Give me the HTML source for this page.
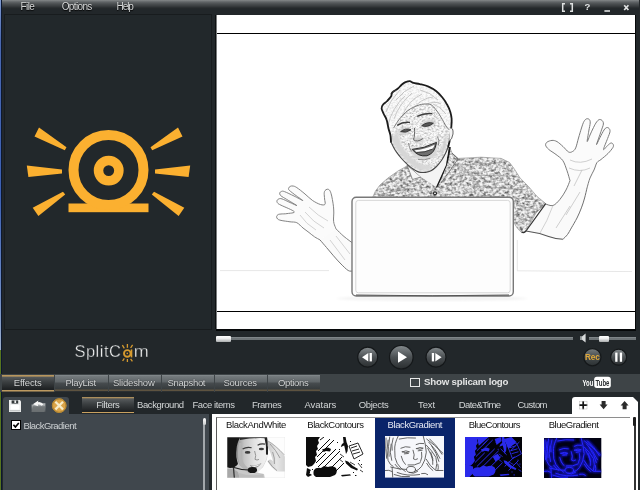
<!DOCTYPE html>
<html>
<head>
<meta charset="utf-8">
<title>SplitCam</title>
<style>
*{margin:0;padding:0;box-sizing:border-box;}
html,body{width:640px;height:490px;overflow:hidden;background:#22272a;}
body{position:relative;font-family:"Liberation Sans",sans-serif;font-size:10px;color:#cfd2d3;}
#app{position:absolute;left:0;top:0;width:640px;height:490px;overflow:hidden;will-change:transform;}
.abs{position:absolute;}
.t{position:absolute;white-space:nowrap;}
#topbar{left:0;top:0;width:640px;height:15px;background:linear-gradient(#858989 0px,#606466 2px,#4a4e50 4px,#3a3e40 6px,#262a2c 8px,#22272a 9px,#22272a 15px);}
#lstripe{left:0;top:0;width:1.2px;height:350px;background:linear-gradient(#7f9ad0 0,#4a68b0 12%,#3c60b4 55%,#6f8cc4 85%,#9db0cc 100%);}
#lstripe2{left:0;top:350px;width:1.2px;height:140px;background:#56741f;}
#leftpanel{left:4px;top:14px;width:208px;height:316px;background:#22282b;border:1px solid #181c1e;}
#video{left:216px;top:14px;width:420px;height:317px;background:#060809;}
#videow{left:217px;top:15px;width:418px;height:314px;background:#fff;overflow:hidden;}
#vl{left:215px;top:15px;width:2px;height:314px;background:linear-gradient(90deg,#0d1011 0,#0d1011 50%,#7a7c7d 50%);}
.hl{position:absolute;left:0;width:418px;height:1px;background:#000;}
.tabbar{left:0;top:374px;width:640px;height:18px;background:#3e4447;}
.tab{position:absolute;top:1px;height:17px;
 background:linear-gradient(#8b9194 0,#757b7e 1px,#5f6568 7px,#474c4f 8px,#363b3d 14px,#5e5340 15px,#5e5340 16px,#2c3032 16px,#2c3032 17px);}
.tab.act{top:0.5px;height:17px;background:linear-gradient(#b8965e 0,#b8965e 1.2px,#55595b 2px,#3b3f41 7px,#1f2224 14px,#1f2224 15px,#bd9a60 15px,#bd9a60 16.4px,#2c3032 16.6px);}
#ltab{left:3px;top:397px;width:66px;height:18px;background:#40474d;border-radius:3px 3px 0 0;}
#leftlist{left:3px;top:414px;width:206px;height:76px;background:#40474d;}
#rightlist{left:212px;top:414px;width:426px;height:76px;background:#fff;}
#rtab{left:572px;top:397px;width:66px;height:18px;background:#fff;border-radius:3px 0 0 0;}
</style>
</head>
<body>
<div id="app">
<div id="video" class="abs"></div>
<div id="vl" class="abs"></div>
<div id="videow" class="abs">
<svg style="position:absolute;left:0;top:0" width="418" height="314" viewBox="217 15 418 314">
 <defs>
  <filter id="soft" x="-5%" y="-5%" width="110%" height="110%"><feGaussianBlur stdDeviation="0.5"/></filter>
  <filter id="soft2" x="-5%" y="-5%" width="110%" height="110%"><feGaussianBlur stdDeviation="1.2"/></filter>
  <pattern id="shirt" width="6.2" height="5.2" patternUnits="userSpaceOnUse" patternTransform="rotate(-9)">
   <rect width="6.2" height="5.2" fill="#ececec"/>
   <path d="M0.3 1.5q1.5-1.8 3 0q-1.4 1.7-3 0z" fill="#646464"/>
   <path d="M3.3 4.1q1.4-1.7 2.7 0q-1.2 1.5-2.7 0z" fill="#7a7a7a"/>
   <path d="M0 3.9l1.9.7M3.8.7l2.1.6" stroke="#9a9a9a" stroke-width=".7"/>
   <path d="M1.2 2.9l1 .5M4.6 2.2l.9.5" stroke="#c2c2c2" stroke-width=".6"/>
  </pattern>
  <filter id="shirtn" x="0" y="0" width="100%" height="100%" color-interpolation-filters="sRGB">
   <feTurbulence type="fractalNoise" baseFrequency="0.3 0.36" numOctaves="2" seed="7" result="n"/>
   <feColorMatrix in="n" type="matrix" values="1.9 0 0 0 -0.17  1.9 0 0 0 -0.17  1.9 0 0 0 -0.17  0 0 0 0 1" result="g"/>
   <feComposite in="g" in2="SourceGraphic" operator="in"/>
  </filter>
  <filter id="facen" x="0" y="0" width="100%" height="100%" color-interpolation-filters="sRGB">
   <feTurbulence type="fractalNoise" baseFrequency="0.5 0.55" numOctaves="2" seed="11" result="n"/>
   <feColorMatrix in="n" type="matrix" values="1.2 0 0 0 0.28  1.2 0 0 0 0.28  1.2 0 0 0 0.28  0 0 0 0 1" result="g"/>
   <feComposite in="g" in2="SourceGraphic" operator="in"/>
  </filter>
  <clipPath id="shirtclip"><path d="M407,166 L398,171 L388,178 L380,185 L375.5,191 L372.5,197.6 L512.6,197.6 L513.6,222 L517.5,228.6 L521.8,232.8 L526,231 L536,213 L545.7,203.6 L537,196.4 L528,186 L520,177.9 L514,168.5 L509.4,162.4 L501.2,158.4 L481,157.2 L458.4,158.4 L452.2,153.3 L449.6,147 L446,165 L436.3,187 L421,177Z"/></clipPath>
 </defs>

 <g filter="url(#soft)" fill="none" stroke="#e4e4e4" stroke-width="0.9">
  <path d="M220,270.6 L329,270.6"/>
  <path d="M517,270.8 L632,271.6"/>
 </g>
 <ellipse cx="432" cy="298.5" rx="95" ry="2.5" fill="#f3f3f3" filter="url(#soft2)"/>

 <!-- shirt -->
 <g filter="url(#soft)">
  <path d="M407,166 L398,171 L388,178 L380,185 L375.5,191 L372.5,197.6 L512.6,197.6 L513.6,222 L517.5,228.6 L521.8,232.8 L526,231 L536,213 L545.7,203.6 L537,196.4 L528,186 L520,177.9 L514,168.5 L509.4,162.4 L501.2,158.4 L481,157.2 L458.4,158.4 L452.2,153.3 L449.6,147 L446,165 L436.3,187 L421,177Z" fill="#ccc" filter="url(#shirtn)"/>
  <path d="M407,166 L398,171 L388,178 L380,185 L375.5,191 L372.5,197.6 L512.6,197.6 L513.6,222 L517.5,228.6 L521.8,232.8 L526,231 L536,213 L545.7,203.6 L537,196.4 L528,186 L520,177.9 L514,168.5 L509.4,162.4 L501.2,158.4 L481,157.2 L458.4,158.4 L452.2,153.3 L449.6,147 L446,165 L436.3,187 L421,177Z" fill="url(#shirt)" opacity=".38"/>
  <g clip-path="url(#shirtclip)" stroke="#7d7d7d" stroke-width="1.1" fill="none" opacity=".5">
   <path d="M380,186 L400,178 M392,191 L420,182 M455,165 L500,163 M460,175 L515,176 M470,186 L528,190 M480,195 L538,200 M516,205 L538,210 M516,215 L532,222 M378,195 L410,188"/>
  </g>
  <path d="M407,166 L398,171 L388,178 L380,185 L375.5,191 L372.5,197.6 L512.6,197.6 L513.6,222 L517.5,228.6 L521.8,232.8 L526,231 L536,213 L545.7,203.6 L537,196.4 L528,186 L520,177.9 L514,168.5 L509.4,162.4 L501.2,158.4 L481,157.2 L458.4,158.4 L452.2,153.3 L449.6,147 L446,165 L436.3,187 L421,177Z" fill="none" stroke="#9a9a9a" stroke-width="0.7"/>
  <path d="M407,165 L421,177 L412.5,179.5 Z" fill="#f6f6f6" stroke="#777" stroke-width=".8"/>
  <path d="M449.8,147 Q448.4,158 445.8,165.5 Q441,178 436.3,187.4" fill="none" stroke="#1d1d1d" stroke-width="1.9"/>
  <path d="M452,153 L458,159 L449,172 L441,183" fill="none" stroke="#666" stroke-width=".8"/>
  <circle cx="435" cy="193.3" r="1.5" fill="#fff" stroke="#222" stroke-width="1.2"/>
 </g>

 <!-- neck -->
 <path d="M408,165 L421,177 L436,187 L446,165 L448,150 L431,171 L419,172 Z" fill="#f4f4f4" filter="url(#soft)"/>

 <!-- head -->
 <g filter="url(#soft)">
  <path d="M391.0,142.0 C390.5,140.0 390.8,137.2 390.4,135.0 C390.0,132.8 389.1,131.0 388.5,128.5 C387.9,126.0 387.4,122.2 386.6,119.8 C385.8,117.2 384.3,115.4 383.5,113.5 C382.7,111.6 381.7,110.0 381.6,108.5 C381.5,107.0 382.0,106.0 382.9,104.8 C383.8,103.5 385.9,102.4 387.2,101.0 C388.6,99.6 390.1,98.0 391.0,96.6 C391.9,95.2 391.2,93.8 392.4,92.4 C393.5,91.1 396.4,89.8 397.9,88.5 C399.4,87.2 400.4,85.8 401.6,84.8 C402.9,83.7 404.0,82.8 405.4,82.2 C406.8,81.7 408.4,81.1 409.8,81.2 C411.1,81.4 411.8,82.4 413.5,82.9 C415.2,83.4 417.2,83.5 419.8,84.1 C422.2,84.7 425.8,85.4 428.5,86.6 C431.2,87.8 433.7,89.2 436.0,91.0 C438.3,92.8 440.4,95.0 442.2,97.2 C444.1,99.5 445.9,102.2 447.2,104.8 C448.6,107.2 449.7,110.0 450.4,112.2 C451.1,114.5 451.4,116.2 451.6,118.5 C451.8,120.8 451.6,123.4 451.4,126.0 C451.2,128.6 450.9,131.5 450.6,134.0 C450.3,136.5 450.0,138.8 449.6,141.0 C449.2,143.2 448.9,144.9 448.2,147.0 C447.5,149.1 446.5,151.3 445.4,153.5 C444.3,155.7 443.1,158.0 441.6,160.2 C440.1,162.4 438.3,164.7 436.5,166.5 C434.7,168.3 432.8,169.8 431.0,170.8 C429.2,171.8 427.5,172.2 425.5,172.4 C423.5,172.6 421.2,172.7 419.1,172.1 C417.0,171.5 415.0,170.3 413.0,169.0 C411.0,167.7 409.0,165.9 407.1,164.2 C405.2,162.4 403.3,160.5 401.5,158.5 C399.7,156.5 397.9,154.1 396.5,152.2 C395.1,150.3 394.3,148.7 393.4,147.0 C392.5,145.3 391.5,144.0 391.0,142.0Z" fill="#fbfbfb"/>
  <path d="M393.6,128.0 C394.1,126.8 394.0,127.2 394.8,126.0 C395.5,124.8 397.0,122.5 398.0,121.0 C399.0,119.5 399.5,118.9 401.0,117.2 C402.5,115.6 405.0,112.8 407.2,111.0 C409.5,109.2 412.0,107.8 414.8,106.6 C417.5,105.4 420.8,104.4 423.5,104.1 C426.2,103.8 428.9,103.8 431.0,104.8 C433.1,105.7 434.3,107.7 436.0,109.8 C437.7,111.8 439.3,114.5 441.0,117.2 C442.7,120.0 444.6,123.9 446.0,126.0 C447.4,128.1 448.8,128.0 449.4,130.0 C450.0,132.0 449.8,135.2 449.6,138.0 C449.4,140.8 448.9,144.3 448.2,146.9 C447.5,149.5 446.5,151.3 445.4,153.5 C444.3,155.7 443.1,158.0 441.6,160.2 C440.1,162.4 438.3,164.7 436.5,166.5 C434.7,168.3 432.8,169.8 431.0,170.8 C429.2,171.8 427.5,172.2 425.5,172.4 C423.5,172.6 421.2,172.7 419.1,172.1 C417.0,171.5 415.0,170.3 413.0,169.0 C411.0,167.7 409.0,165.9 407.1,164.2 C405.2,162.4 403.3,160.5 401.5,158.5 C399.7,156.5 397.9,154.1 396.5,152.2 C395.1,150.3 394.3,148.7 393.4,147.0 C392.5,145.3 391.2,144.3 391.0,142.0 C390.8,139.7 391.6,135.3 392.0,133.0 C392.4,130.7 393.1,129.2 393.6,128.0Z" fill="#f5f5f5"/>
  <path d="M393.6,128.0 C394.1,126.8 394.0,127.2 394.8,126.0 C395.5,124.8 397.0,122.5 398.0,121.0 C399.0,119.5 399.5,118.9 401.0,117.2 C402.5,115.6 405.0,112.8 407.2,111.0 C409.5,109.2 412.0,107.8 414.8,106.6 C417.5,105.4 420.8,104.4 423.5,104.1 C426.2,103.8 428.9,103.8 431.0,104.8 C433.1,105.7 434.3,107.7 436.0,109.8 C437.7,111.8 439.3,114.5 441.0,117.2 C442.7,120.0 444.6,123.9 446.0,126.0 C447.4,128.1 448.8,128.0 449.4,130.0 C450.0,132.0 449.8,135.2 449.6,138.0 C449.4,140.8 448.9,144.3 448.2,146.9 C447.5,149.5 446.5,151.3 445.4,153.5 C444.3,155.7 443.1,158.0 441.6,160.2 C440.1,162.4 438.3,164.7 436.5,166.5 C434.7,168.3 432.8,169.8 431.0,170.8 C429.2,171.8 427.5,172.2 425.5,172.4 C423.5,172.6 421.2,172.7 419.1,172.1 C417.0,171.5 415.0,170.3 413.0,169.0 C411.0,167.7 409.0,165.9 407.1,164.2 C405.2,162.4 403.3,160.5 401.5,158.5 C399.7,156.5 397.9,154.1 396.5,152.2 C395.1,150.3 394.3,148.7 393.4,147.0 C392.5,145.3 391.2,144.3 391.0,142.0 C390.8,139.7 391.6,135.3 392.0,133.0 C392.4,130.7 393.1,129.2 393.6,128.0Z" fill="#ccc" filter="url(#facen)" opacity=".4"/>
  <path d="M391.0,142.0 C390.5,140.0 390.8,137.2 390.4,135.0 C390.0,132.8 389.1,131.0 388.5,128.5 C387.9,126.0 387.4,122.2 386.6,119.8 C385.8,117.2 384.3,115.4 383.5,113.5 C382.7,111.6 381.7,110.0 381.6,108.5 C381.5,107.0 382.0,106.0 382.9,104.8 C383.8,103.5 385.9,102.4 387.2,101.0 C388.6,99.6 390.1,98.0 391.0,96.6 C391.9,95.2 391.2,93.8 392.4,92.4 C393.5,91.1 396.4,89.8 397.9,88.5 C399.4,87.2 400.4,85.8 401.6,84.8 C402.9,83.7 404.0,82.8 405.4,82.2 C406.8,81.7 408.4,81.1 409.8,81.2 C411.1,81.4 411.8,82.4 413.5,82.9 C415.2,83.4 417.2,83.5 419.8,84.1 C422.2,84.7 425.8,85.4 428.5,86.6 C431.2,87.8 433.7,89.2 436.0,91.0 C438.3,92.8 440.4,95.0 442.2,97.2 C444.1,99.5 445.9,102.2 447.2,104.8 C448.6,107.2 449.7,110.0 450.4,112.2 C451.1,114.5 451.4,116.2 451.6,118.5 C451.8,120.8 451.6,123.4 451.4,126.0 C451.2,128.6 450.9,131.5 450.6,134.0 C450.3,136.5 450.0,138.8 449.6,141.0 C449.2,143.2 448.9,144.9 448.2,147.0 C447.5,149.1 446.5,151.3 445.4,153.5 C444.3,155.7 443.1,158.0 441.6,160.2 C440.1,162.4 438.3,164.7 436.5,166.5 C434.7,168.3 432.8,169.8 431.0,170.8 C429.2,171.8 427.5,172.2 425.5,172.4 C423.5,172.6 421.2,172.7 419.1,172.1 C417.0,171.5 415.0,170.3 413.0,169.0 C411.0,167.7 409.0,165.9 407.1,164.2 C405.2,162.4 403.3,160.5 401.5,158.5 C399.7,156.5 397.9,154.1 396.5,152.2 C395.1,150.3 394.3,148.7 393.4,147.0 C392.5,145.3 391.5,144.0 391.0,142.0Z" fill="#ccc" filter="url(#facen)" opacity=".22"/>
  <g filter="url(#soft2)">
   <path d="M391,140 L398,152 L408,163 L419,170.6 L425,167 L411,157 L402,146 L397,130Z" fill="#d6d6d6"/>
   <path d="M439,160 L446.5,147 L448,126 L444,140 L440,152Z" fill="#d2d2d2"/>
   <ellipse cx="404.6" cy="131" rx="6.5" ry="3.6" fill="#cecece" transform="rotate(-14 404.6 131)"/>
   <ellipse cx="428.6" cy="123.4" rx="7" ry="3.6" fill="#cecece" transform="rotate(-14 428.6 123.4)"/>
   <ellipse cx="418" cy="140" rx="4.5" ry="3" fill="#cdcdcd"/>
   <path d="M409,147 Q424,150 438,140 L437,156 Q427,162 414,158Z" fill="#d6d6d6"/>
   <path d="M420,163 Q426,167 433,163 L430,170 L421,171Z" fill="#d8d8d8"/>
  </g>
  <g fill="none" stroke="#b2b2b2" stroke-width=".7">
   <path d="M388,125 Q392,108 405,96 M394,119 Q399,104 412,93 M402,116 Q409,100 422,94 M412,110 Q421,98 433,97 M425,105 Q434,100 441,104 M386,112 Q390,100 400,90 M433,104 Q440,106 446,114 M396,100 Q404,90 414,86 M420,90 Q430,92 438,100"/>
  </g>
  <path d="M391.0,142.0 C390.9,140.8 390.8,137.2 390.4,135.0 C390.0,132.8 389.1,131.0 388.5,128.5 C387.9,126.0 387.4,122.2 386.6,119.8 C385.8,117.2 384.3,115.4 383.5,113.5 C382.7,111.6 381.7,110.0 381.6,108.5 C381.5,107.0 382.0,106.0 382.9,104.8 C383.8,103.5 385.9,102.4 387.2,101.0 C388.6,99.6 390.1,98.0 391.0,96.6 C391.9,95.2 391.2,93.8 392.4,92.4 C393.5,91.1 396.4,89.8 397.9,88.5 C399.4,87.2 400.4,85.8 401.6,84.8 C402.9,83.7 404.0,82.8 405.4,82.2 C406.8,81.7 408.4,81.1 409.8,81.2 C411.1,81.4 411.8,82.4 413.5,82.9 C415.2,83.4 417.2,83.5 419.8,84.1 C422.2,84.7 425.8,85.4 428.5,86.6 C431.2,87.8 433.7,89.2 436.0,91.0 C438.3,92.8 440.4,95.0 442.2,97.2 C444.1,99.5 445.9,102.2 447.2,104.8 C448.6,107.2 449.7,110.0 450.4,112.2 C451.1,114.5 451.4,116.2 451.6,118.5 C451.8,120.8 451.6,123.4 451.4,126.0 C451.2,128.6 450.9,131.5 450.6,134.0 C450.3,136.5 450.0,138.8 449.6,141.0 C449.2,143.2 448.4,146.0 448.2,147.0" fill="none" stroke="#1c1c1c" stroke-width="1.8" stroke-linejoin="round" stroke-linecap="round"/>
  <path d="M390.6,93.6 Q392.6,91 396,90.4" fill="none" stroke="#3a3a3a" stroke-width="1"/>
  <path d="M391.0,142.0 C391.4,142.8 392.5,145.3 393.4,147.0 C394.3,148.7 395.1,150.3 396.5,152.2 C397.9,154.1 399.7,156.5 401.5,158.5 C403.3,160.5 405.2,162.4 407.1,164.2 C409.0,165.9 411.0,167.7 413.0,169.0 C415.0,170.3 417.0,171.5 419.1,172.1 C421.2,172.7 423.5,172.6 425.5,172.4 C427.5,172.2 429.2,171.8 431.0,170.8 C432.8,169.8 434.7,168.3 436.5,166.5 C438.3,164.7 440.1,162.4 441.6,160.2 C443.1,158.0 444.3,155.7 445.4,153.5 C446.5,151.3 447.7,148.0 448.2,146.9" fill="none" stroke="#474747" stroke-width="1.1" stroke-linejoin="round"/>
  <path d="M393.6,128.0 C393.8,127.7 394.0,127.2 394.8,126.0 C395.5,124.8 397.0,122.5 398.0,121.0 C399.0,119.5 399.5,118.9 401.0,117.2 C402.5,115.6 405.0,112.8 407.2,111.0 C409.5,109.2 412.0,107.8 414.8,106.6 C417.5,105.4 420.8,104.4 423.5,104.1 C426.2,103.8 428.9,103.8 431.0,104.8 C433.1,105.7 434.3,107.7 436.0,109.8 C437.7,111.8 439.3,114.5 441.0,117.2 C442.7,120.0 444.6,123.9 446.0,126.0 C447.4,128.1 448.8,129.3 449.4,130.0" fill="none" stroke="#6e6e6e" stroke-width=".9"/>
  <path d="M397.2,125.4 Q403,121.4 410,122.4" fill="none" stroke="#3c3c3c" stroke-width="1.4"/>
  <path d="M417.2,116.4 Q424,112.8 432.4,113.6" fill="none" stroke="#3c3c3c" stroke-width="1.4"/>
  <path d="M400.6,131.6 Q405.5,127.6 411,129.8 Q405.8,133.6 400.6,131.6Z" fill="#585858" stroke="#2c2c2c" stroke-width=".8"/>
  <path d="M421.6,125.8 Q427.2,121.2 433.4,123.2 Q427.6,128 421.6,125.8Z" fill="#585858" stroke="#2c2c2c" stroke-width=".8"/>
  <path d="M414.5,128 Q415,136 413.4,139.6 Q417,142.8 422.8,138.6" fill="none" stroke="#666" stroke-width="1"/>
  <path d="M408.5,143 Q409,148 411.6,151.4 M437.4,136.6 Q440,140 438.4,145.4" fill="none" stroke="#7d7d7d" stroke-width=".9"/>
  <path d="M412.2,149.4 Q424,148.6 436.5,142.4 Q435,153.4 427,155.8 Q418,157 412.2,149.4Z" fill="#707070" stroke="#2a2a2a" stroke-width="1"/>
  <path d="M414.6,150.2 Q424.6,149.8 434.6,144.8 Q434,147.6 432.4,148.8 Q424,152.6 416.4,152Z" fill="#fcfcfc"/>
  <path d="M416.4,152.4 Q424,153 432.4,149.2" fill="none" stroke="#333" stroke-width=".8"/>
  <path d="M418,159.4 Q424,161 430.4,158.2" fill="none" stroke="#8a8a8a" stroke-width=".9"/>
  <path d="M449.8,128 Q453.6,127 453,134 Q452,140 449.2,141" fill="#f4f4f4" stroke="#555" stroke-width=".9"/>
 </g>

 <!-- right arm + hand -->
 <g filter="url(#soft)" stroke-linejoin="round">
  <path d="M545.5,204 L553,205.5 L560,199.3 L566,190 L570,180.7 L587,188 L584.6,198 L581.4,207.9 L577,218 L571.4,227.9 L567.5,234.5 L562.9,239.3 L548.6,236.4 L526,231Z" fill="#fafafa" stroke="none"/>
  <path d="M570.0,180.7 C569.5,179.0 568.2,174.0 567.0,170.7 C565.8,167.4 564.7,163.4 562.9,160.7 C561.1,158.0 558.4,156.4 556.0,154.5 C553.6,152.6 550.3,150.9 548.6,149.3 C546.9,147.8 545.9,146.4 545.6,145.2 C545.4,144.0 546.0,142.9 547.1,142.1 C548.2,141.3 550.4,140.5 552.0,140.4 C553.6,140.3 555.2,140.6 557.0,141.6 C558.8,142.6 561.1,144.8 563.0,146.5 C564.9,148.2 567.0,151.2 568.6,152.0 C570.2,152.8 571.3,152.2 572.5,151.5 C573.7,150.8 574.7,150.2 575.7,147.9 C576.7,145.7 577.5,141.3 578.5,138.0 C579.5,134.7 580.6,130.8 581.5,128.0 C582.4,125.2 583.1,122.9 584.0,121.4 C584.9,119.9 585.7,119.1 586.6,118.8 C587.5,118.5 588.8,118.9 589.4,119.6 C590.0,120.3 590.3,121.1 590.2,123.0 C590.1,124.9 589.3,127.9 588.8,131.0 C588.3,134.1 587.0,140.8 587.2,141.5 C587.4,142.2 589.0,137.3 590.0,135.0 C591.0,132.7 592.4,129.7 593.5,127.5 C594.6,125.3 595.6,123.3 596.6,122.0 C597.6,120.7 598.3,119.9 599.2,119.6 C600.1,119.3 601.3,119.7 602.0,120.4 C602.7,121.1 603.6,122.2 603.4,124.0 C603.2,125.8 602.1,128.1 601.0,131.5 C599.9,134.9 596.7,143.5 596.5,144.5 C596.3,145.5 598.8,139.9 600.0,137.5 C601.2,135.1 602.9,131.7 604.0,130.0 C605.1,128.3 605.8,127.9 606.6,127.6 C607.4,127.3 608.4,127.7 609.0,128.4 C609.6,129.1 610.2,129.9 610.0,131.6 C609.8,133.3 608.7,135.5 607.6,138.5 C606.5,141.5 603.5,148.3 603.5,149.5 C603.5,150.7 606.2,146.7 607.5,145.6 C608.8,144.5 610.0,143.2 611.0,143.0 C612.0,142.8 612.9,143.7 613.2,144.4 C613.5,145.2 613.8,146.0 612.9,147.5 C612.0,149.0 610.0,151.5 608.0,153.5 C606.0,155.5 602.8,158.0 601.0,159.5 C599.2,161.0 598.2,160.8 597.0,162.5 C595.8,164.2 595.2,167.4 594.0,170.0 C592.8,172.6 591.2,175.0 590.0,178.0 C588.8,181.0 587.5,186.3 587.0,188.0" fill="#fbfbfb" stroke="#747474" stroke-width=".95"/>
  <path d="M570.0,180.7 C569.3,182.2 567.7,186.9 566.0,190.0 C564.3,193.1 562.2,196.7 560.0,199.3 C557.8,201.9 555.4,204.7 553.0,205.5 C550.6,206.3 546.8,204.2 545.5,204.0" fill="none" stroke="#747474" stroke-width=".95"/>
  <path d="M587.0,188.0 C586.6,189.7 585.5,194.7 584.6,198.0 C583.7,201.3 582.7,204.6 581.4,207.9 C580.1,211.2 578.7,214.7 577.0,218.0 C575.3,221.3 573.0,225.2 571.4,227.9 C569.8,230.7 568.9,232.6 567.5,234.5 C566.1,236.4 563.7,238.5 562.9,239.3" fill="none" stroke="#6f6f6f" stroke-width="1"/>
  <path d="M545.7,203.6 L526,231 Q523.4,234 521.6,231.6" fill="none" stroke="#333" stroke-width="1.2"/>
  <path d="M526,231 Q537,232.4 548.6,236.4 Q556,239 562.9,239.3" fill="none" stroke="#555" stroke-width="1.1"/>
  <path d="M553,205.5 Q547,222 540,233" fill="none" stroke="#c6c6c6" stroke-width=".8"/>
 </g>
 <g filter="url(#soft)" fill="none" stroke="#bcbcbc" stroke-width=".7">
  <path d="M570,160 Q580,165 592,159 M569,168 Q580,173 590,168 M566,215 L580,192 M556,228 L570,206 M574,186 L582,170"/>
 </g>

 <!-- left arm + hand -->
 <g filter="url(#soft)" stroke-linejoin="round">
  <path d="M336,228.8 L344,236.5 L353.1,243.5 L353,271 L348.2,270.5 L341,264 L333.5,255.8 L326.5,247.5 L320,239.9Z" fill="#fafafa"/>
  <path d="M336.0,228.8 C335.7,227.9 334.4,225.1 334.0,223.5 C333.6,221.9 333.5,220.8 333.5,219.0 C333.5,217.2 333.8,215.0 333.8,213.0 C333.8,211.0 333.7,209.1 333.5,206.8 C333.3,204.6 332.8,201.8 332.4,199.5 C332.0,197.2 331.5,194.9 331.0,193.3 C330.5,191.7 330.0,190.7 329.4,190.0 C328.8,189.3 327.9,189.1 327.2,189.2 C326.5,189.3 325.5,189.9 325.0,190.6 C324.5,191.3 324.3,191.9 324.2,193.3 C324.1,194.7 324.5,197.2 324.6,199.0 C324.7,200.8 325.7,203.4 325.0,204.3 C324.3,205.2 322.6,205.1 320.5,204.5 C318.4,203.9 315.3,202.3 312.7,200.6 C310.1,198.8 307.6,196.2 305.0,194.0 C302.4,191.8 298.8,188.9 296.8,187.6 C294.8,186.3 294.1,186.2 293.0,186.0 C291.9,185.8 290.9,186.0 290.2,186.4 C289.5,186.8 288.7,187.5 288.6,188.2 C288.5,188.9 288.2,189.2 289.4,190.4 C290.6,191.6 293.8,193.9 296.0,195.6 C298.2,197.3 303.2,200.5 302.9,200.6 C302.6,200.7 297.1,197.5 294.0,196.0 C290.9,194.5 286.6,192.4 284.5,191.6 C282.4,190.8 282.3,191.2 281.5,191.4 C280.7,191.6 280.0,192.2 279.8,192.8 C279.6,193.4 279.6,194.2 280.2,195.0 C280.8,195.8 280.7,195.8 283.5,197.5 C286.3,199.2 295.7,204.7 296.8,205.5 C297.9,206.3 292.5,203.6 290.0,202.5 C287.5,201.4 283.9,199.5 282.0,198.9 C280.1,198.3 279.6,198.6 278.8,198.9 C278.0,199.2 277.2,199.9 277.0,200.6 C276.8,201.3 276.9,202.2 277.6,203.0 C278.3,203.8 278.2,203.8 281.0,205.2 C283.8,206.6 293.3,210.3 294.3,211.7 C295.3,213.1 289.2,213.2 287.0,213.6 C284.8,214.0 282.5,213.8 281.0,214.0 C279.5,214.2 278.7,214.2 278.0,214.6 C277.3,215.0 276.7,215.9 276.6,216.6 C276.5,217.3 276.9,218.4 277.6,219.0 C278.3,219.6 278.9,219.9 281.0,220.4 C283.1,220.9 287.4,221.4 290.0,221.8 C292.6,222.2 294.6,221.7 296.8,222.7 C299.0,223.7 301.0,226.4 303.0,228.0 C305.0,229.6 307.1,231.0 309.0,232.5 C310.9,234.0 312.7,235.6 314.5,236.8 C316.3,238.0 319.1,239.4 320.0,239.9" fill="#fbfbfb" stroke="#7c7c7c" stroke-width=".95"/>
  <path d="M336.0,228.8 C337.3,230.1 341.1,234.1 344.0,236.5 C346.9,238.9 351.6,242.3 353.1,243.5" fill="none" stroke="#7c7c7c" stroke-width=".95"/>
  <path d="M320.0,239.9 C321.1,241.2 324.2,244.8 326.5,247.5 C328.8,250.2 331.1,253.1 333.5,255.8 C335.9,258.6 338.6,261.6 341.0,264.0 C343.4,266.4 346.2,269.3 348.2,270.5 C350.2,271.7 352.2,270.9 353.0,271.0" fill="none" stroke="#777" stroke-width="1"/>
 </g>
 <g filter="url(#soft)" fill="none" stroke="#c2c2c2" stroke-width=".7">
  <path d="M305,212 Q313,222 324,228 M309,207 Q318,216 328,221 M330,240 L345,260 M336,236 L350,254 M300,215 Q306,224 316,230"/>
 </g>

 <!-- laptop -->
 <g filter="url(#soft)">
  <rect x="352" y="197.3" width="161.3" height="98.7" rx="4.2" fill="#fdfdfd" stroke="#787878" stroke-width="1.4"/>
  <rect x="355.8" y="200.4" width="154.4" height="92.4" rx="2.6" fill="none" stroke="#d3d3d3" stroke-width=".9"/>
  <path d="M356,295 Q432,296.6 509,295" stroke="#555" stroke-width="1" fill="none"/>
  <path d="M517.3,240 L517.3,270.6" stroke="#e0e0e0" stroke-width=".8"/>
 </g>
</svg>
 <div class="hl" style="top:18px"></div>
 <div class="hl" style="top:296px"></div>
</div>
<div id="topbar" class="abs"></div>
<div class="abs" style="left:638.5px;top:0;width:1.5px;height:15px;background:#25292b;"></div>
<div class="t" style="left:20.6px;top:0.5px;font-size:10px;line-height:12px;letter-spacing:-0.604px;color:#d4d6d6;text-shadow:0 1px 1px #000;">File</div>
<div class="t" style="left:61.7px;top:0.5px;font-size:10px;line-height:12px;letter-spacing:-0.638px;color:#d4d6d6;text-shadow:0 1px 1px #000;">Options</div>
<div class="t" style="left:116.6px;top:0.5px;font-size:10px;line-height:12px;letter-spacing:-1.092px;color:#d4d6d6;text-shadow:0 1px 1px #000;">Help</div>
<svg class="abs" style="left:555px;top:0" width="85" height="15" viewBox="555 0 85 15">
 <g fill="none" stroke="#dfe1e1" stroke-width="1.5">
  <path d="M565 3.8h-2.3v7.4h2.3M570 3.8h2.3v7.4h-2.3"/>
  <path d="M604.4 11h5.6" stroke-width="1.6"/>
  <path d="M624.2 5.2l4.2 4.8M628.4 5.2l-4.2 4.8" stroke-width="1.7"/>
 </g>
 <text x="584.4" y="10.4" font-family="Liberation Sans, sans-serif" font-weight="bold" font-size="9.6" fill="#dfe1e1">?</text>
</svg>
<div id="lstripe" class="abs"></div>
<div id="lstripe2" class="abs"></div>
<div class="abs" style="left:1px;top:0;width:1.4px;height:490px;background:#0c1830;"></div>
<div id="leftpanel" class="abs"></div>
<svg class="abs" style="left:5px;top:15px" width="207" height="315" viewBox="5 15 207 315">
 <g fill="#fbb030">
  <polygon points="34.5,136.5 39,127.5 66.5,147.3 64.8,150.3"/>
  <polygon points="26.8,165.5 62,169.6 62,173.6 28.4,177"/>
  <polygon points="32.7,207.8 38.4,216 65.2,194.6 63,191.8"/>
  <polygon points="182.5,136.5 178,127.5 150.5,147.3 152.2,150.3"/>
  <polygon points="190.2,165.5 155,169.6 155,173.6 188.6,177"/>
  <polygon points="184.3,207.8 178.6,216 151.8,194.6 154,191.8"/>
  <rect x="68.5" y="203.5" width="80" height="8.7"/>
 </g>
 <circle cx="108.5" cy="170" r="35" fill="none" stroke="#fbb030" stroke-width="10"/>
 <circle cx="108.7" cy="170.6" r="10.2" fill="none" stroke="#fbb030" stroke-width="9.5"/>
</svg>
<svg class="abs" style="left:60px;top:338px" width="110" height="30" viewBox="60 338 110 30">
 <g font-family="Liberation Sans, sans-serif" font-size="16.5" fill="#f1f2f2" stroke="#22272a" stroke-width="0.35">
  <text x="74.4" y="357.4" textLength="46.6" lengthAdjust="spacing">SplitC</text>
  <text x="133.8" y="357.4" textLength="15" lengthAdjust="spacingAndGlyphs">m</text>
 </g>
 <g stroke="#d69a2e" stroke-width="1.3" fill="none">
  <circle cx="127.3" cy="353.4" r="3.3" stroke-width="1.9"/>
  <line x1="131.5" y1="349.4" x2="131.5" y2="357.4" stroke-width="1.6"/>
  <circle cx="127.3" cy="353.4" r="0.8" fill="#d69a2e" stroke="none"/>
  <line x1="127.4" y1="347.8" x2="127.4" y2="344"/>
  <line x1="124.3" y1="348.4" x2="122.4" y2="345.2"/>
  <line x1="130.6" y1="348" x2="132.6" y2="344.8"/>
  <line x1="127.4" y1="359" x2="127.4" y2="362"/>
  <line x1="124.3" y1="358.4" x2="122.6" y2="361"/>
  <line x1="130.6" y1="358.8" x2="132.4" y2="361.4"/>
 </g>
</svg>
<div class="abs" style="left:217px;top:337px;width:356px;height:3px;background:#6d7376;border-top:1px solid #7f8588;"></div>
<div class="abs" style="left:216px;top:335.5px;width:15px;height:6.5px;border-radius:1px;background:linear-gradient(#ffffff,#f0f0f0 40%,#a9acad);"></div>
<div class="abs" style="left:589px;top:337px;width:47px;height:3px;background:#6d7376;border-top:1px solid #7f8588;"></div>
<div class="abs" style="left:599px;top:335.5px;width:10px;height:6.5px;border-radius:1px;background:linear-gradient(#ffffff,#f0f0f0 40%,#a9acad);"></div>
<svg class="abs" style="left:578px;top:332px" width="10" height="12" viewBox="0 0 10 12">
 <polygon points="2,4.6 4,4.6 7.6,1.6 7.6,10.6 4,7.8 2,7.8" fill="#d9dbdc"/>
 <rect x="2" y="4.6" width="1.8" height="3.2" fill="#8e9496"/>
</svg>
<svg class="abs" style="left:350px;top:342px" width="290" height="32" viewBox="350 342 290 32">
 <defs>
  <linearGradient id="bg1" x1="0" y1="0" x2="0" y2="1">
   <stop offset="0" stop-color="#858b8e"/><stop offset="0.5" stop-color="#4b5053"/><stop offset="1" stop-color="#2a2e30"/>
  </linearGradient>
  <linearGradient id="bg2" x1="0" y1="0" x2="0" y2="1">
   <stop offset="0" stop-color="#767c7e"/><stop offset="0.5" stop-color="#444a4c"/><stop offset="1" stop-color="#2c3133"/>
  </linearGradient>
 </defs>
 <g stroke="#15181a" stroke-width="1.2">
  <circle cx="367.7" cy="357.2" r="10" fill="url(#bg1)"/>
  <circle cx="401.3" cy="357.2" r="11.8" fill="url(#bg1)"/>
  <circle cx="436" cy="357.2" r="10" fill="url(#bg1)"/>
  <circle cx="592.4" cy="357.2" r="8.6" fill="url(#bg2)"/>
  <circle cx="618.6" cy="357.2" r="8" fill="url(#bg1)"/>
 </g>
 <g fill="#fff">
  <polygon points="362,357.2 368.3,353 368.3,361.4"/>
  <rect x="369.6" y="353" width="2.3" height="8.4"/>
  <polygon points="398,351.6 407,357.2 398,362.8"/>
  <rect x="431.8" y="353" width="2.3" height="8.4"/>
  <polygon points="441.6,357.2 435.3,353 435.3,361.4"/>
  <rect x="615.2" y="352.6" width="2.3" height="9.2"/>
  <rect x="619.8" y="352.6" width="2.3" height="9.2"/>
 </g>
 <text x="592.4" y="360.4" text-anchor="middle" font-family="Liberation Sans, sans-serif" font-size="8.2" font-weight="bold" fill="#e0a93c">Rec</text>
</svg>
<div class="abs tabbar">
 <div class="tab act" style="left:2px;width:52px"></div>
 <div class="tab" style="left:55px;width:53px"></div>
 <div class="tab" style="left:109px;width:52px"></div>
 <div class="tab" style="left:162px;width:52px"></div>
 <div class="tab" style="left:215px;width:52px"></div>
 <div class="tab" style="left:268px;width:52px"></div>
</div>
<div class="t" style="left:13.7px;top:377px;font-size:9.5px;line-height:12px;letter-spacing:-0.117px;color:#d6d9da;text-shadow:0 0 1px #111;">Effects</div>
<div class="t" style="left:65.6px;top:377px;font-size:9.5px;line-height:12px;letter-spacing:-0.396px;color:#d6d9da;text-shadow:0 0 1px #111;">PlayList</div>
<div class="t" style="left:112.9px;top:377px;font-size:9.5px;line-height:12px;letter-spacing:-0.178px;color:#d6d9da;text-shadow:0 0 1px #111;">Slideshow</div>
<div class="t" style="left:167.5px;top:377px;font-size:9.5px;line-height:12px;letter-spacing:-0.306px;color:#d6d9da;text-shadow:0 0 1px #111;">Snapshot</div>
<div class="t" style="left:223.4px;top:377px;font-size:9.5px;line-height:12px;letter-spacing:-0.193px;color:#d6d9da;text-shadow:0 0 1px #111;">Sources</div>
<div class="t" style="left:278.1px;top:377px;font-size:9.5px;line-height:12px;letter-spacing:-0.363px;color:#d6d9da;text-shadow:0 0 1px #111;">Options</div>
<div class="abs" style="left:410px;top:378px;width:10px;height:9px;border:1.5px solid #e8e9e9;"></div>
<div class="t" style="left:424px;top:376px;font-size:9.7px;line-height:12px;letter-spacing:-0.203px;color:#e4e5e5;font-weight:bold;">Show splicam logo</div>
<svg class="abs" style="left:580px;top:375px" width="34" height="15" viewBox="580 375 34 15">
 <rect x="594.2" y="376.7" width="16.6" height="11.2" rx="2.6" fill="#fff"/>
 <text x="582.5" y="386" font-family="Liberation Sans, sans-serif" font-weight="bold" font-size="9.5" fill="#fff" textLength="10.8" lengthAdjust="spacingAndGlyphs">You</text>
 <text x="595.6" y="386" font-family="Liberation Sans, sans-serif" font-weight="bold" font-size="9.5" fill="#2a2e30" textLength="13.8" lengthAdjust="spacingAndGlyphs">Tube</text>
</svg>
<div id="ltab" class="abs"></div>
<svg class="abs" style="left:5px;top:397px" width="64" height="17" viewBox="5 397 64 17">
 <defs><linearGradient id="fold" x1="0" y1="0" x2="0" y2="1"><stop offset="0" stop-color="#b9bdbf"/><stop offset="1" stop-color="#54595b"/></linearGradient></defs>
 <path d="M9 400.1h10.8l1.2 1.2v10.6h-12z" fill="#eeefef"/>
 <rect x="11.6" y="400.4" width="6.6" height="3.2" fill="#33383a"/>
 <rect x="14.4" y="400.4" width="1.7" height="2.6" fill="#eeefef"/>
 <rect x="10.6" y="405" width="8.8" height="4.6" fill="#fff"/>
 <path d="M9.6 410.8h10.8" stroke="#aeb2b4" stroke-width=".9"/>
 <path d="M31.6 404.6h4.4l1.2-1.4h8.2v8.8h-13.8z" fill="url(#fold)"/>
 <path d="M33 406.2h12.6l-1.4 5.8h-12.6z" fill="#6d7274" opacity=".85"/>
 <path d="M32.8 404.2l5.6-3.6l-.4 1.6q3.6-.6 5.4 2.4l-2 1.2q-1.2-1.6-3.6-1.2l.4 1.6z" fill="#f6f6f6"/>
 <circle cx="59.2" cy="405.6" r="6.7" fill="#dba448" stroke="#b98a32" stroke-width="1"/>
 <path d="M55.4 401.8l7.6 7.6M63 401.8l-7.6 7.6" stroke="#f7ecc9" stroke-width="2.2" stroke-linecap="butt"/>
 <circle cx="59.2" cy="405.6" r="6.9" fill="none" stroke="#b98a32" stroke-width="1"/>
</svg>
<div class="abs" style="left:81.5px;top:396.5px;width:52.5px;height:16.5px;background:linear-gradient(#c9a160 0,#8d7a58 1px,#55595b 2px,#3b3f41 7px,#1f2224 14px,#1f2224 15px,#c9a160 15px,#c9a160 17px);"></div>
<div class="t" style="left:96.25px;top:399px;font-size:9.5px;line-height:12px;letter-spacing:-0.373px;color:#d3d6d7;">Filters</div>
<div class="t" style="left:137px;top:399px;font-size:9.5px;line-height:12px;letter-spacing:-0.395px;color:#d3d6d7;">Background</div>
<div class="t" style="left:192.5px;top:399px;font-size:9.5px;line-height:12px;letter-spacing:-0.446px;color:#d3d6d7;">Face items</div>
<div class="t" style="left:252px;top:399px;font-size:9.5px;line-height:12px;letter-spacing:-0.491px;color:#d3d6d7;">Frames</div>
<div class="t" style="left:304.5px;top:399px;font-size:9.5px;line-height:12px;letter-spacing:-0.041px;color:#d3d6d7;">Avatars</div>
<div class="t" style="left:358.75px;top:399px;font-size:9.5px;line-height:12px;letter-spacing:-0.387px;color:#d3d6d7;">Objects</div>
<div class="t" style="left:418px;top:399px;font-size:9.5px;line-height:12px;letter-spacing:-0.106px;color:#d3d6d7;">Text</div>
<div class="t" style="left:458.75px;top:399px;font-size:9.5px;line-height:12px;letter-spacing:-0.601px;color:#d3d6d7;">Date&amp;Time</div>
<div class="t" style="left:517.5px;top:399px;font-size:9.5px;line-height:12px;letter-spacing:-0.539px;color:#d3d6d7;">Custom</div>
<div id="leftlist" class="abs"></div>
<div class="abs" style="left:11px;top:420px;width:10px;height:10px;background:#fff;border:1.5px solid #000;"></div>
<svg class="abs" style="left:11px;top:420px" width="10" height="10" viewBox="0 0 10 10"><path d="M2.4 4.8l2 2.2l3.4-4" fill="none" stroke="#000" stroke-width="1.7"/></svg>
<div class="t" style="left:23.4px;top:419.5px;font-size:9.5px;line-height:12px;letter-spacing:-0.544px;color:#cdd1d3;">BlackGradient</div>
<div class="abs" style="left:203px;top:424px;width:2.2px;height:66px;background:#a2a7ab;"></div>
<div class="abs" style="left:202.5px;top:417.5px;width:3.5px;height:7px;border-radius:1.5px;background:linear-gradient(#fff,#c9cccd);"></div>
<div id="rtab" class="abs"></div>
<div id="rightlist" class="abs"></div>
<div class="abs" style="left:216px;top:417px;width:414px;height:73px;border-top:1px solid #8e8e8e;border-left:1px solid #5a5a5a;"></div>
<div class="abs" style="left:375.2px;top:417.6px;width:79.6px;height:70.4px;background:#0a246a;"></div>
<svg class="abs" style="left:572px;top:397px" width="66" height="17" viewBox="572 397 66 17">
 <polygon points="633,397 638,397 638,402" fill="#22272a"/>
 <path d="M583.2 401v8.2M579.1 405.1h8.2" stroke="#111" stroke-width="1.7" fill="none"/>
 <rect x="579.4" y="401.2" width="7.6" height="7.8" fill="none" stroke="#bdbdbd" stroke-width="0.5"/>
 <path d="M601.6 401h4v3.6h2l-4 4.6l-4-4.6h2z" fill="#2b2b2b"/>
 <path d="M622.6 409.2h4v-3.6h2l-4-4.6l-4 4.6h2z" fill="#2b2b2b"/>
</svg>
<div class="abs" style="left:634px;top:424px;width:1.5px;height:66px;background:#333;"></div>
<div class="abs" style="left:633px;top:417px;width:3px;height:8.5px;border-radius:1px;background:#1d1d1d;"></div>
<div class="t" style="left:226px;top:419px;font-size:9.5px;line-height:12px;letter-spacing:-0.340px;color:#111;">BlackAndWhite</div>
<div class="t" style="left:307.25px;top:419px;font-size:9.5px;line-height:12px;letter-spacing:-0.425px;color:#111;">BlackContours</div>
<div class="t" style="left:387.6px;top:419px;font-size:9.5px;line-height:12px;letter-spacing:-0.405px;color:#e6e9f4;">BlackGradient</div>
<div class="t" style="left:468.7px;top:419px;font-size:9.5px;line-height:12px;letter-spacing:-0.522px;color:#111;">BlueContours</div>
<div class="t" style="left:548.7px;top:419px;font-size:9.5px;line-height:12px;letter-spacing:-0.479px;color:#111;">BlueGradient</div>
<svg width="0" height="0" style="position:absolute">
 <defs>
  <filter id="tb" x="-5%" y="-5%" width="110%" height="110%"><feGaussianBlur stdDeviation="0.55"/></filter>
  <linearGradient id="faceg" x1="0" y1="0" x2="1" y2="0"><stop offset="0" stop-color="#8e8e8e"/><stop offset=".25" stop-color="#c4c4c4"/><stop offset=".6" stop-color="#e4e4e4"/><stop offset="1" stop-color="#f1f1f1"/></linearGradient>
  <linearGradient id="handg" x1="0" y1="0" x2="1" y2="0"><stop offset="0" stop-color="#c9c9c9"/><stop offset=".5" stop-color="#e6e6e6"/><stop offset="1" stop-color="#d2d2d2"/></linearGradient>
  <filter id="tb3" x="-5%" y="-5%" width="110%" height="110%"><feGaussianBlur stdDeviation="1.3"/></filter>
  <filter id="tb2" x="-5%" y="-5%" width="110%" height="110%"><feGaussianBlur stdDeviation="0.3"/></filter>
  <!-- contour shapes (foreground = currentColor) -->
  <symbol id="contour" viewBox="0 0 58 41">
   <g fill="currentColor" stroke="none">
    <path d="M0,0 L14,0 L12,3 L13,6 L11,9 L12,12 L10,14 L11,18 L9,20 L10,24 L8,27 L6,29 L2,30 L0,28Z"/>
    <path d="M8,33 Q10,30 15,31 L18,29 L22,30 Q27,28 30,31 Q32,35 29,38 L24,40 L10,40 Q6,38 8,33Z"/>
    <path d="M1,31 L5,33 L3,36 L6,38 L2,40 L0,38Z"/>
    <path d="M37,0 L39.6,0 L40.5,5 L42,9 L41.6,14 L40,17 L39,12 L37.6,6Z"/>
    <path d="M36,7 L39,5 L39.4,8 L34.6,10Z"/>
    <path d="M16,12.6 L22,10.6 L25,12 L24,14.6 L20,14 L17.6,15Z"/>
    <path d="M39,23.6 L42,24.4 L47,29 L52,32 L51,33.6 L45,31 L40,26.6Z"/>
    <path d="M35,38 L44,37.2 L45,38.6 L36,39.6Z"/>
   </g>
   <g stroke="currentColor" fill="none" stroke-width="1">
    <path d="M12,14 L22,4 M11,20 L28,3 M10,26 L20,16 M12,30 L30,12 M14,34 L34,14 M20,36 L36,20 M26,38 L38,26 M14,3 L18,0 M18,8 L24,2"/>
    <path d="M43,9 L52,6 L57,17 L48,22Z M45,11 L51,9 M46,14 L53,12 M47,17 L54,15" stroke-width=".9"/>
    <path d="M34,17 L38,20 M33,22 L37,25 M44,25 L49,28 M52,26 L56,31 M54,33 L57,35" stroke-width=".8"/>
   </g>
   <g fill="currentColor">
    <rect x="3" y="35" width="1" height="1"/><rect x="6" y="32" width="1" height="1"/><rect x="33" y="12" width="1" height="1"/>
    <rect x="47" y="35" width="1" height="1"/><rect x="53" y="23" width="1" height="1"/><rect x="31" y="5" width="1" height="1"/>
    <rect x="49" y="38" width="1.4" height="1"/><rect x="55" y="27" width="1" height="1"/><rect x="44" y="4" width="1" height="1"/>
   </g>
  </symbol>
  <!-- line-drawing (stroke = currentColor) -->
  <symbol id="lines" viewBox="0 0 58 41">
   <g fill="none" stroke="currentColor" stroke-linecap="round" stroke-linejoin="round">
    <path d="M13,0 Q9,8 9.6,14 Q9,22 12,27 Q15,32 20,35"/>
    <path d="M3,4 Q1,14 3,24 Q5,29 8,30"/>
    <path d="M6,8 Q4,16 6.6,24"/>
    <path d="M37.6,0 Q40,8 40.6,16 Q40,24 36,30 Q33,34 29,35"/>
    <path d="M15.6,12 Q20,9.6 24.6,11"/>
    <path d="M30.6,8.4 Q34,6.6 38,7.4"/>
    <path d="M17,15.6 Q20.6,13.6 24,15.6 Q20.6,17.4 17,15.6Z"/>
    <path d="M31,12.4 Q34.6,10.4 37.6,12 Q34.6,14 31,12.4Z"/>
    <path d="M27.6,14 Q29.6,19 28,22.6 Q30,24 32,22.6"/>
    <path d="M22.6,28.6 Q29,29.6 34.6,26.4"/>
    <path d="M5.6,30.6 Q14,33 21,33"/>
    <ellipse cx="25.6" cy="33" rx="4.4" ry="3"/>
    <path d="M41,3 Q48,8 57,17"/>
    <path d="M40.6,9 Q46,14 50,21 Q52,27 50,33"/>
    <path d="M43,6 Q50,13 54,22"/>
    <path d="M40.6,23 Q44,30 50,34 L57,34"/>
    <path d="M45,16 Q48,22 47,28"/>
    <path d="M7,31 L7.6,41 M12,36 Q22,40 34,38"/>
    <path d="M14,3 Q22,1 30,2"/>
    <path d="M1,2 Q0,12 1.6,22 M4.6,1 Q2.6,10 4,20 M8,2 Q6,8 7,14 M10,28 Q12,31 15,33"/>
    <path d="M16,20 Q17,25 20,28 M36,16 Q37,21 35,25 M24,36 Q28,38 32,35 M19,17.6 L23,17.2 M32.6,14.6 L36.6,14"/>
    <path d="M44,3 Q51,9 56,18 M46,10 Q51,17 53,25 M42,12 Q46,19 47,24 M52,28 Q53,31 52,34 M41,27 Q43,31 47,34"/>
    <path d="M0,34 Q4,33 7,35 M9,38 Q16,41 24,40 M36,37 Q40,36 42,38"/>
   </g>
  </symbol>
 </defs>
</svg>
<svg class="abs" style="left:227px;top:437px" width="58" height="41" viewBox="0 0 58 41" preserveAspectRatio="none">
 <rect width="58" height="41" fill="#fdfdfd"/>
 <g filter="url(#tb)">
  <path d="M11,-1 L40,-1 L41.4,10 L40,22 L36,30 L30,35.6 L37,37 L38,42 L-1,42 L-1,-1Z" fill="#c9c9c9"/>
  <path d="M12,0 Q9,8 9.6,14 Q9,22 12,27 Q15,32 22,36 Q28,37.6 32,34 Q37,29 39.6,22 Q41.4,12 38,0Z" fill="url(#faceg)"/>
  <path d="M24,0 Q34,2 38,8 L38,0Z" fill="#f4f4f4"/>
  <path d="M12,6 Q10,16 12,26 Q15,32 22,36 L24,33 Q17,29 15,22 Q13,14 15,6Z" fill="#b4b4b4"/>
  <path d="M-1,-1 L14,-1 Q10,5 9.6,12 Q8.6,20 11,27 Q8,31 3,31 L-1,30Z" fill="#151515"/>
  <path d="M12,-1 L38,-1 L38,1.2 Q26,0.6 13,3Z" fill="#2a2a2a"/>
  <path d="M37.4,0 L40,0 Q41.6,9 41,17 Q40,19 39,17 Q39.6,9 37.4,0Z" fill="#222"/>
  <path d="M-1,32 Q6,31 11,35 L13,42 L-1,42Z" fill="#a8a8a8"/>
  <path d="M12,36 Q24,40 36,37 L37,42 L12,42Z" fill="#bdbdbd"/>
  <path d="M6.4,30 L7.4,41.5" stroke="#333" stroke-width="1.3"/>
  <!-- hand -->
  <path d="M41,4 Q46,6 52,12 Q57,17 58.5,21 L58.5,34.6 L50,34.6 Q44,31 40.6,24 Q43,21 46,24 Q44,16 40.6,9Z" fill="url(#handg)"/>
  <path d="M43,7 Q49,13 53,21 M45.6,15 Q48,21 47.4,27 M41,24 Q45,30 50,33.6" stroke="#8f8f8f" stroke-width=".8" fill="none"/>
  <path d="M41,4 Q48,8 57.5,18" stroke="#9a9a9a" stroke-width=".7" fill="none"/>
  <!-- features -->
  <path d="M15.6,12 Q20,9.4 24.6,10.8" stroke="#3a3a3a" stroke-width="1.2" fill="none"/>
  <path d="M30.6,8.2 Q34,6.4 38,7.2" stroke="#3a3a3a" stroke-width="1.2" fill="none"/>
  <ellipse cx="20.6" cy="15.4" rx="2.8" ry="1.3" fill="#3a3a3a"/>
  <ellipse cx="34.4" cy="12" rx="2.6" ry="1.2" fill="#3a3a3a"/>
  <path d="M27.6,14 Q29.6,19 28,22.4 Q30,23.6 32,22.4" stroke="#8c8c8c" stroke-width=".9" fill="none"/>
  <path d="M22.8,28 Q29,29.4 34.6,26 Q31,31.4 27,31 Q24,30.6 22.8,28Z" fill="#8a8a8a"/>
  <path d="M24,28.4 Q29,29.4 33.6,26.8 Q31,29.8 27.6,30 Q25,29.8 24,28.4Z" fill="#fafafa"/>
  <path d="M5,30 Q14,33 22,33" stroke="#222" stroke-width="1.1" fill="none"/>
  <ellipse cx="25.4" cy="33" rx="4.7" ry="3.1" fill="#141414"/>
 </g>
 <rect x="0" y="0" width="58" height="41" fill="none" stroke="#e4e4e4" stroke-width=".6"/>
</svg>
<svg class="abs" style="left:306.3px;top:437px" width="58" height="41" viewBox="0 0 58 41" preserveAspectRatio="none"><rect width="58" height="41" fill="#fff"/><g filter="url(#tb2)"><use href="#contour" width="58" height="41" color="#111"/></g></svg>
<svg class="abs" style="left:384.8px;top:436.4px" width="59" height="41.6" viewBox="0 0 58 41" preserveAspectRatio="none"><rect width="58" height="41" fill="#f6f7fb"/><g filter="url(#tb2)"><use href="#lines" width="58" height="41" color="#505050" stroke-width=".85"/></g></svg>
<svg class="abs" style="left:464.8px;top:436.8px" width="57.4" height="40.4" viewBox="0 0 58 41" preserveAspectRatio="none"><rect width="58" height="41" fill="#020208"/><g filter="url(#tb2)"><use href="#contour" width="58" height="41" color="#2c2ceb"/><g fill="#2c2ceb"><path d="M12,0 L24,0 L14,9Z M0,28 L8,30 L9,36 L4,41 L0,41Z M30,2 L36,0 L37,4 L32,8Z M39,2 L47,0 L52,5 L44,12Z M28,20 L33,17 L36,21 L31,25Z"/></g><g stroke="#2c2ceb" stroke-width="1" fill="none"><path d="M40,30 L50,20 M44,34 L54,24 M46,14 L55,5 M36,12 L42,18"/></g></g></svg>
<svg class="abs" style="left:544.3px;top:437.5px" width="57.3" height="40.2" viewBox="0 0 58 41" preserveAspectRatio="none"><rect width="58" height="41" fill="#010112"/><g filter="url(#tb3)" opacity=".75"><use href="#lines" width="58" height="41" color="#1818d8" stroke-width="3"/></g><g filter="url(#tb2)"><use href="#lines" width="58" height="41" color="#2626ff" stroke-width="1"/></g></svg>
</div>
</body>
</html>
